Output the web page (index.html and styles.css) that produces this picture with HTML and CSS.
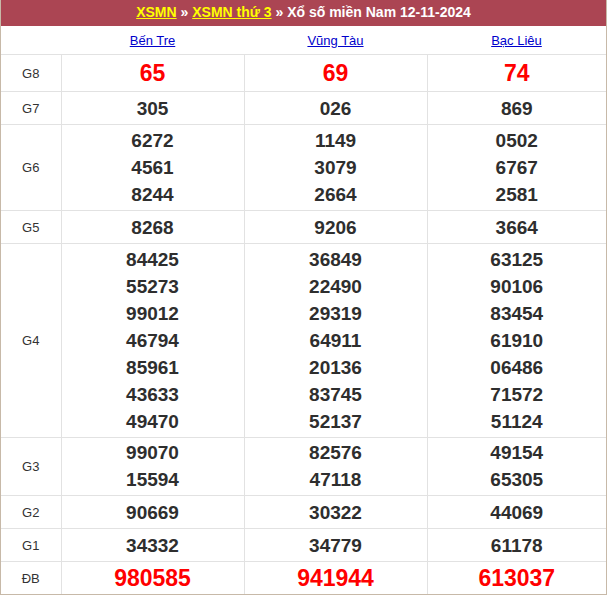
FILE: index.html
```html
<!DOCTYPE html>
<html lang="vi">
<head>
<meta charset="utf-8">
<title>XSMN thứ 3</title>
<link rel="stylesheet" href="styles.css">
</head>
<body>
<div class="box">
  <div class="title">
    <a href="#" class="crumb">XSMN</a> » <a href="#" class="crumb">XSMN thứ 3</a> » Xổ số miền Nam 12-11-2024
  </div>
  <table class="kq">
    <colgroup><col class="c-label"><col class="c-prov"><col class="c-prov"><col class="c-prov-last"></colgroup>
    <tr class="provs">
      <th></th>
      <th><a href="#">Bến Tre</a></th>
      <th><a href="#">Vũng Tàu</a></th>
      <th><a href="#">Bạc Liêu</a></th>
    </tr>
    <tr class="g8">
      <td class="lbl">G8</td>
      <td><div class="n red">65</div></td>
      <td><div class="n red">69</div></td>
      <td><div class="n red">74</div></td>
    </tr>
    <tr class="one">
      <td class="lbl">G7</td>
      <td><div class="n">305</div></td>
      <td><div class="n">026</div></td>
      <td><div class="n">869</div></td>
    </tr>
    <tr>
      <td class="lbl">G6</td>
      <td><div class="n">6272</div><div class="n">4561</div><div class="n">8244</div></td>
      <td><div class="n">1149</div><div class="n">3079</div><div class="n">2664</div></td>
      <td><div class="n">0502</div><div class="n">6767</div><div class="n">2581</div></td>
    </tr>
    <tr class="one">
      <td class="lbl">G5</td>
      <td><div class="n">8268</div></td>
      <td><div class="n">9206</div></td>
      <td><div class="n">3664</div></td>
    </tr>
    <tr>
      <td class="lbl">G4</td>
      <td><div class="n">84425</div><div class="n">55273</div><div class="n">99012</div><div class="n">46794</div><div class="n">85961</div><div class="n">43633</div><div class="n">49470</div></td>
      <td><div class="n">36849</div><div class="n">22490</div><div class="n">29319</div><div class="n">64911</div><div class="n">20136</div><div class="n">83745</div><div class="n">52137</div></td>
      <td><div class="n">63125</div><div class="n">90106</div><div class="n">83454</div><div class="n">61910</div><div class="n">06486</div><div class="n">71572</div><div class="n">51124</div></td>
    </tr>
    <tr class="g3">
      <td class="lbl">G3</td>
      <td><div class="n">99070</div><div class="n">15594</div></td>
      <td><div class="n">82576</div><div class="n">47118</div></td>
      <td><div class="n">49154</div><div class="n">65305</div></td>
    </tr>
    <tr class="one">
      <td class="lbl">G2</td>
      <td><div class="n">90669</div></td>
      <td><div class="n">30322</div></td>
      <td><div class="n">44069</div></td>
    </tr>
    <tr class="one">
      <td class="lbl">G1</td>
      <td><div class="n">34332</div></td>
      <td><div class="n">34779</div></td>
      <td><div class="n">61178</div></td>
    </tr>
    <tr class="one db">
      <td class="lbl">ĐB</td>
      <td><div class="n red">980585</div></td>
      <td><div class="n red">941944</div></td>
      <td><div class="n red">613037</div></td>
    </tr>
  </table>
</div>
</body>
</html>
```
FILE: styles.css
```css
html, body {
  margin: 0;
  padding: 0;
  background: #fff;
}
body {
  font-family: "Liberation Sans", Arial, sans-serif;
  color: #333;
}
.box {
  width: 605px;
  border-left: 1px solid #c7b9a8;
  border-right: 1px solid #c7b9a8;
  border-bottom: 1px solid #c7b9a8;
}
.title {
  height: 26px;
  line-height: 24px;
  background: #ab4553;
  color: #fff;
  font-weight: bold;
  font-size: 14px;
  text-align: center;
}
.title .crumb {
  color: #ffff00;
  text-decoration: underline;
}
.kq {
  width: 605px;
  border-collapse: collapse;
  table-layout: fixed;
}
.c-label { width: 60px; }
.c-prov { width: 183px; }
.c-prov-last { width: 179px; }
.provs th {
  height: 28px;
  padding: 0;
  font-weight: normal;
  font-size: 13px;
  text-align: center;
  vertical-align: middle;
}
.provs th a {
  color: #0000cc;
  text-decoration: underline;
}
.kq td {
  border-top: 1px solid #e2e2e2;
  border-left: 1px solid #e2e2e2;
  padding: 2px 0;
  text-align: center;
  vertical-align: middle;
}
.kq tr.one td {
  padding: 3px 0 2px;
}
.kq tr.g3 td {
  padding: 1px 0 2px;
}
.kq td.lbl {
  border-left: none;
  font-size: 13px;
  color: #333;
}
.n {
  font-size: 19px;
  font-weight: bold;
  line-height: 27px;
  color: #2e2e2e;
}
.n.red {
  color: #f00;
  font-size: 23px;
}
.g8 .n {
  line-height: 32px;
}
```
